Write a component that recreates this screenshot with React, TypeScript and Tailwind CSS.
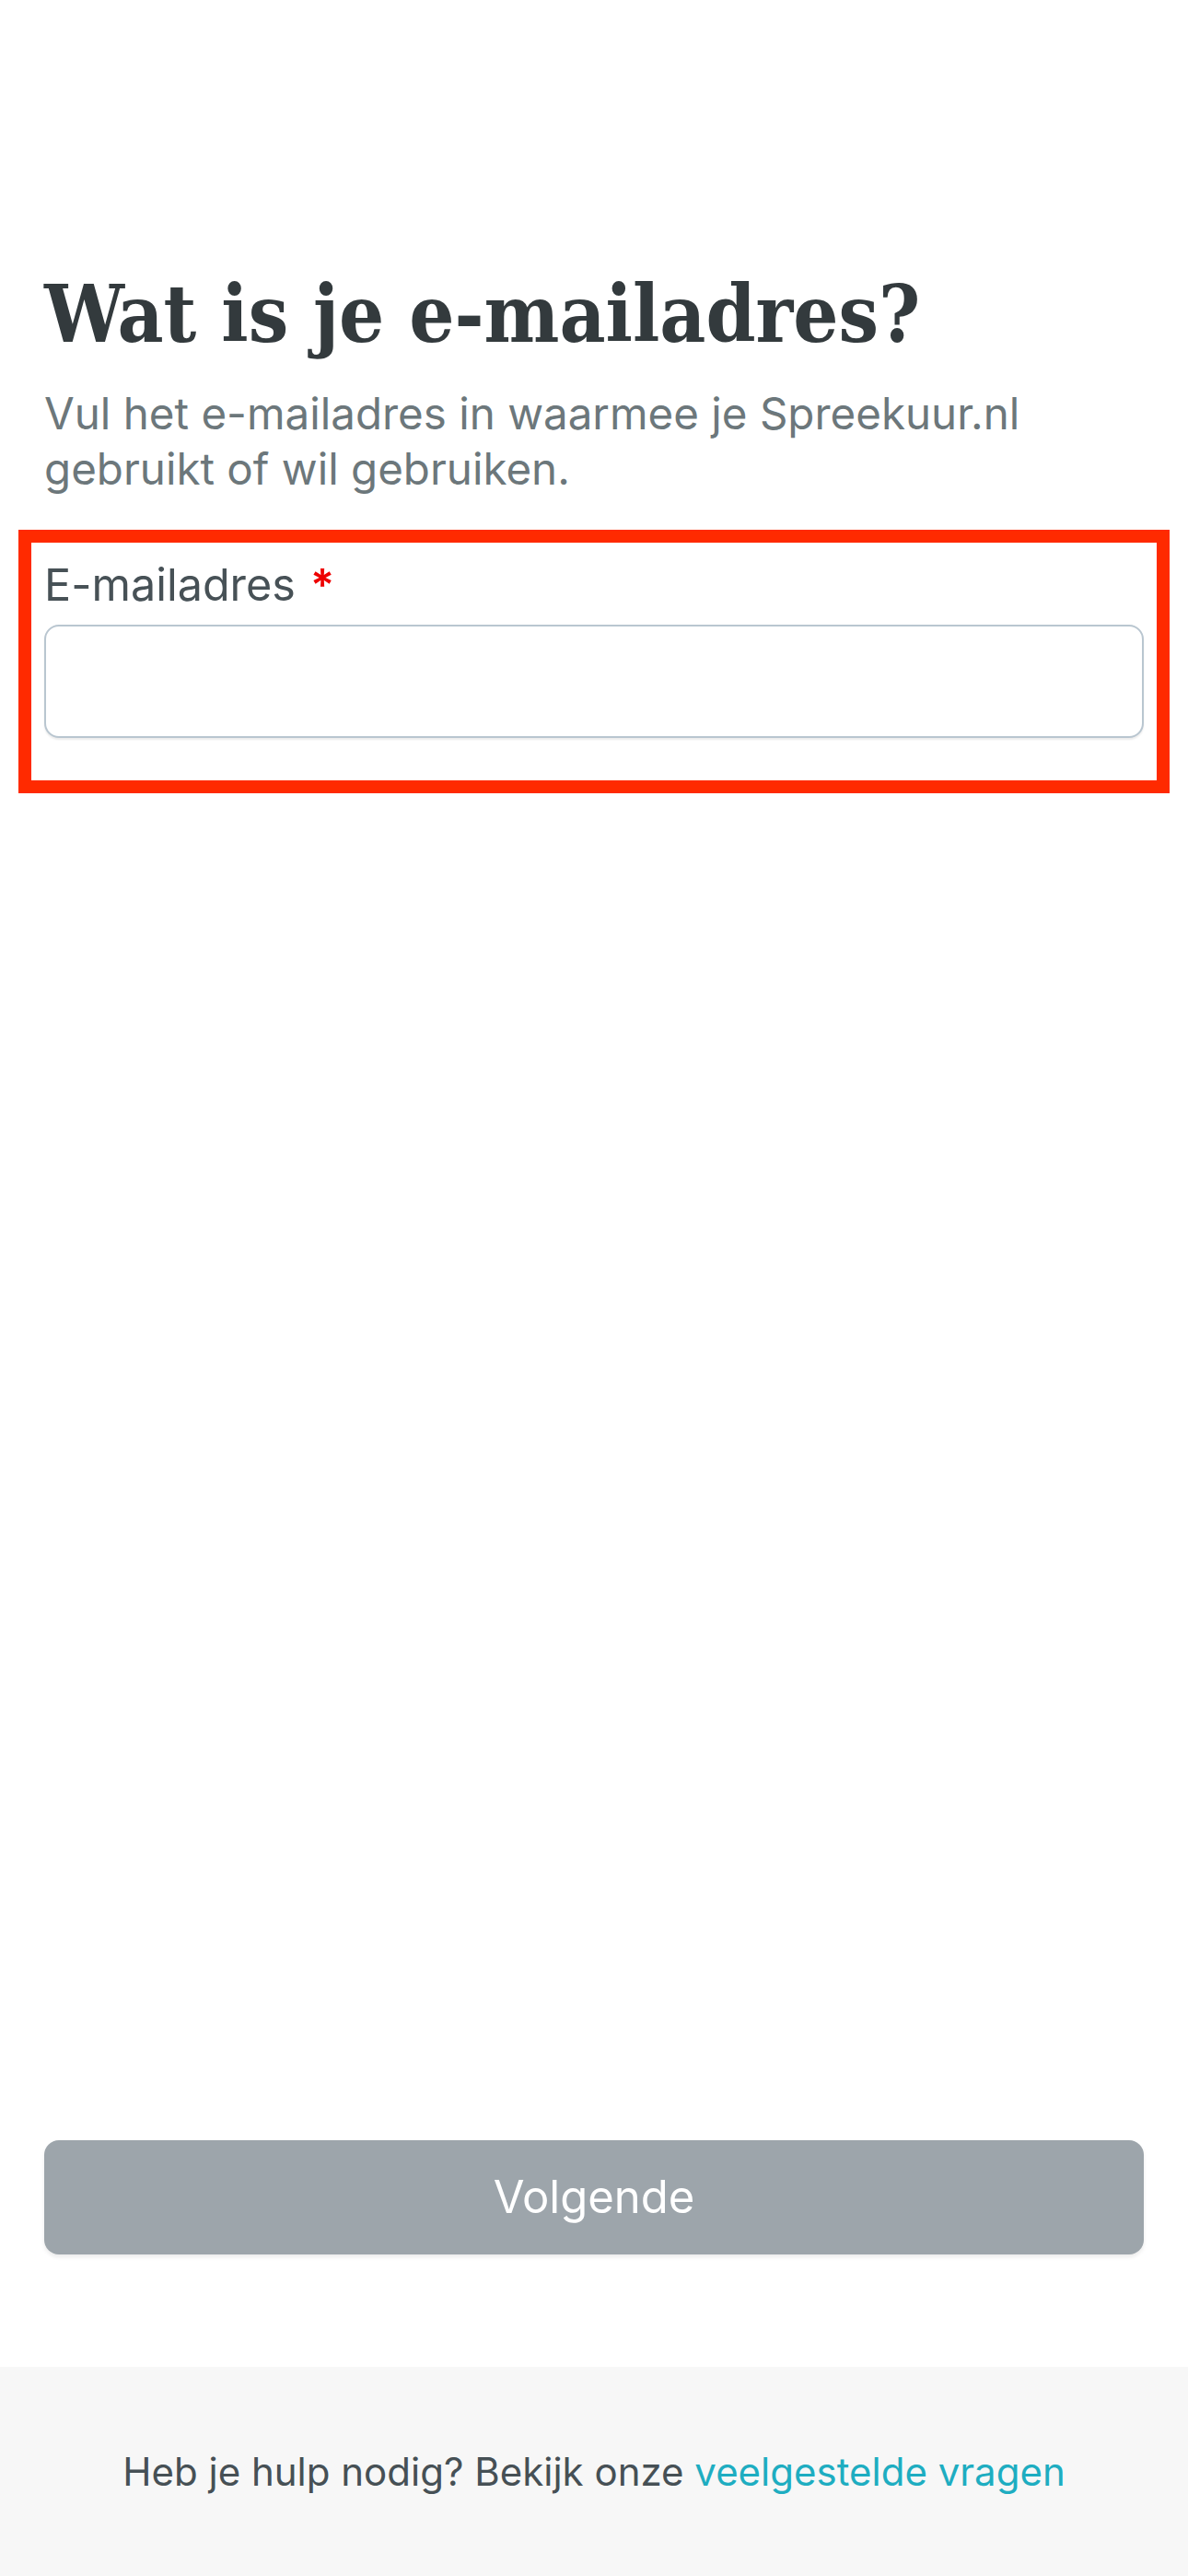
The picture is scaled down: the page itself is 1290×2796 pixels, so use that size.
export default function App() {
  return (
    <div className="min-h-[2796px] flex flex-col bg-white font-['Inter','Liberation_Sans',sans-serif]">
      <main className="flex-1 px-[48px] pt-[291px]">
        <h1 className="font-['DejaVu_Serif_Condensed','DejaVu_Serif',serif] font-bold text-[86px] leading-[100px] text-[#333a3d]">
          Wat is je e-mailadres?
        </h1>
        <p className="mt-[28px] text-[47.5px] leading-[60px] text-[#6c777b]">
          Vul het e-mailadres in waarmee je Spreekuur.nl gebruikt of wil gebruiken.
        </p>

        <div className="mt-[36px] -mx-[28px] border-[14px] border-[#ff2a00] pt-[16px] px-[14px] pb-[46px]">
          <label className="block text-[48.5px] leading-[60px] text-[#475156]">
            E-mailadres
            <span className="ml-[16px] align-top text-[#ee0000] font-semibold">*</span>
          </label>
          <input
            type="email"
            className="mt-[13px] block w-full h-[123px] rounded-[16px] border-2 border-[#b9c6d0] bg-white shadow-[0_2px_2px_rgba(0,0,0,0.08)] outline-none px-[36px] text-[48px]"
          />
        </div>
      </main>

      <div className="px-[48px] pb-[122px]">
        <button className="w-full h-[124px] rounded-[16px] bg-[#9da5ab] text-white text-[49px] font-normal shadow-[0_3px_4px_rgba(0,0,0,0.08)]">
          Volgende
        </button>
      </div>

      <footer className="h-[227px] bg-[#f7f7f7] flex items-center justify-center">
        <p className="text-[42px] text-[#465055]">
          Heb je hulp nodig? Bekijk onze{' '}
          <a href="#" className="text-[#1eadc1]">
            veelgestelde vragen
          </a>
        </p>
      </footer>
    </div>
  )
}
